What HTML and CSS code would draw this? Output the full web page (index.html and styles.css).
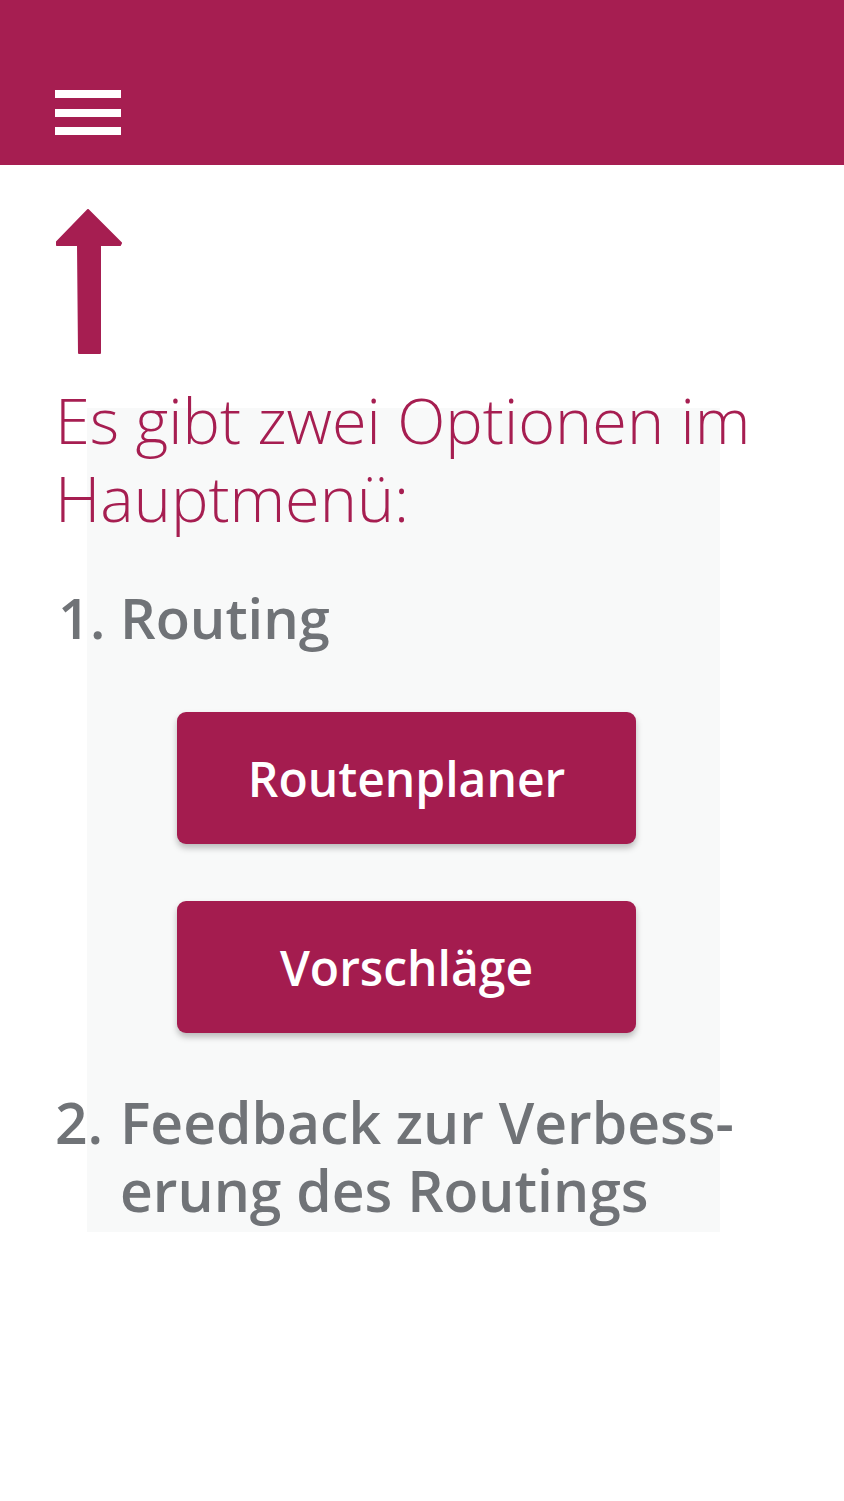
FILE: index.html
```html
<!DOCTYPE html>
<html lang="de">
<head>
<meta charset="utf-8">
<title>Hauptmenü</title>
<link rel="stylesheet" href="styles.css">
</head>
<body>
<header class="topbar">
  <svg class="menu-icon" width="66" height="46" viewBox="0 0 66 46">
    <rect x="0" y="0" width="66" height="8" fill="#fff"/>
    <rect x="0" y="19" width="66" height="8" fill="#fff"/>
    <rect x="0" y="37" width="66" height="8" fill="#fff"/>
  </svg>
</header>
<main class="content">
  <div class="panel"></div>
  <svg class="arrow" width="66" height="146" viewBox="0 0 66 146">
    <path d="M32 1 L65 34 L64 36 L44 36 L44 144 L23 144 L22 36 L1 36 L0 34 Z" fill="#a61e51" stroke="#a61e51" stroke-width="2" stroke-linejoin="round"/>
  </svg>
  <h1 class="title">Es gibt zwei Optionen im Hauptmenü:</h1>
  <h2 class="item item-one">1. Routing</h2>
  <div class="buttons">
    <button class="btn">Routenplaner</button>
    <button class="btn">Vorschläge</button>
  </div>
  <h2 class="item item-two"><span class="num">2.</span><span class="label">Feedback zur Verbess-<br>erung des Routings</span></h2>
</main>
</body>
</html>
```
FILE: styles.css
```css
* { box-sizing: border-box; }
html, body { margin: 0; padding: 0; background: #fff; }
body { font-family: "Open Sans", "Noto Sans", sans-serif; width: 844px; height: 1501px; overflow: hidden; }

.topbar {
  height: 165px;
  background: #a61e51;
  display: flex;
  align-items: flex-start;
  padding: 90px 0 0 55px;
}
.menu-icon { display: block; }

.content {
  position: relative;
  z-index: 0;
  padding: 44px 0 0 55px;
}
.panel {
  position: absolute;
  left: 87px;
  top: 243px;
  width: 633px;
  height: 824px;
  background: #f8f9f9;
  z-index: -1;
}
.arrow { display: block; margin-left: 1px; }

.title {
  margin: 26px 0 0 0;
  font-weight: 300;
  font-size: 63px;
  line-height: 78px;
  color: #a61e51;
  width: 760px;
}

.item {
  margin: 0;
  font-weight: 600;
  color: #707377;
  font-size: 56px;
  line-height: 66px;
}
.item-one { margin-top: 47px; padding-left: 3px; }

.buttons {
  display: flex;
  flex-direction: column;
  gap: 57px;
  padding: 62px 0 0 122px;
}
.btn {
  width: 459px;
  height: 132px;
  border: none;
  border-radius: 9px;
  background: #a41c4f;
  color: #fff;
  font-family: "Open Sans", "Noto Sans", sans-serif;
  font-weight: 600;
  font-size: 48px;
  box-shadow: 0 4px 6px rgba(0,0,0,0.25);
  padding: 0;
}

.item-two {
  margin-top: 55px;
  display: flex;
  font-size: 57px;
  line-height: 68px;
}
.item-two .num { width: 65px; flex: none; }
```
